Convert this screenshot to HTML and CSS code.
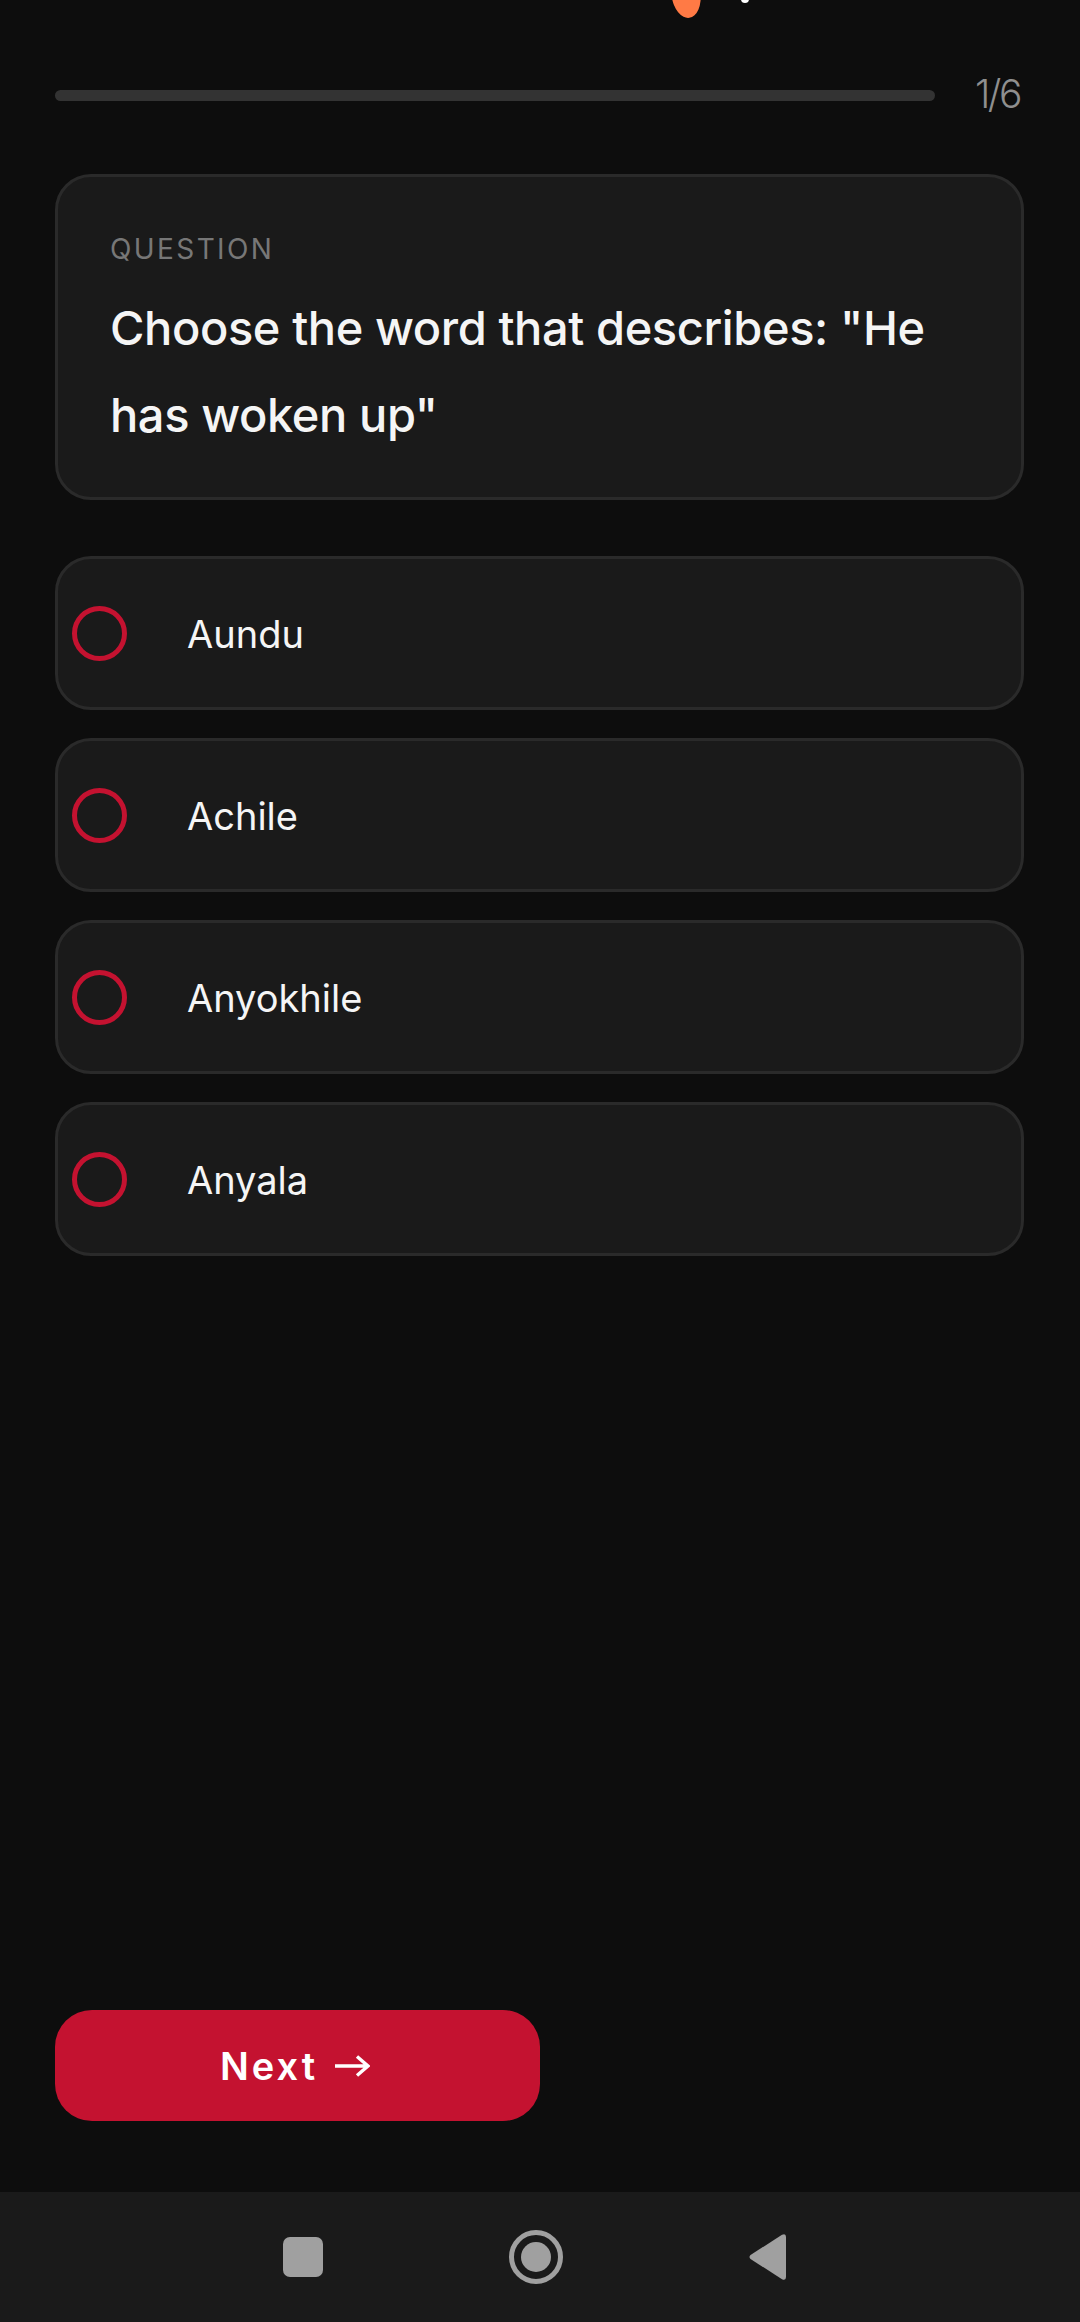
FILE: index.html
```html
<!DOCTYPE html>
<html lang="en">
<head>
<meta charset="utf-8">
<title>Quiz</title>
<link rel="stylesheet" href="styles.css">
</head>
<body>
<div class="screen">
  <div class="status-peek" aria-hidden="true">
    <span class="peek-orange"></span>
    <span class="peek-dot"></span>
  </div>
  <main class="content">
    <div class="progress">
      <div class="progress-track"></div>
      <span class="progress-label">1/6</span>
    </div>
    <section class="question-card">
      <div class="question-eyebrow">QUESTION</div>
      <h1 class="question-text">Choose the word that describes: "He has woken up"</h1>
    </section>
    <ul class="options">
      <li class="option"><span class="radio"></span><span class="option-label">Aundu</span></li>
      <li class="option"><span class="radio"></span><span class="option-label">Achile</span></li>
      <li class="option"><span class="radio"></span><span class="option-label">Anyokhile</span></li>
      <li class="option"><span class="radio"></span><span class="option-label">Anyala</span></li>
    </ul>
    <button class="next" type="button">Next<svg class="next-arrow" viewBox="0 0 36 24" aria-hidden="true"><path d="M1 12H34M23 2.500 34 12 23 21.500" fill="none" stroke="#fff" stroke-width="3.4"/></svg></button>
  </main>
  <nav class="navbar">
    <svg class="nav-square" viewBox="0 0 40 40"><rect width="40" height="40" rx="7" fill="#a0a0a0"/></svg>
    <svg class="nav-home" viewBox="0 0 54 54"><circle cx="27" cy="27" r="24.500" fill="none" stroke="#a0a0a0" stroke-width="5"/><circle cx="27" cy="27" r="15" fill="#a0a0a0"/></svg>
    <svg class="nav-back" viewBox="0 0 37 46"><path d="M33 .8Q37 -1 37 3V43Q37 47 33 45.200L1.500 25Q-.5 23 1.500 21Z" fill="#a0a0a0"/></svg>
  </nav>
</div>
</body>
</html>
```
FILE: styles.css
```css
* { box-sizing: border-box; }
html, body { margin: 0; padding: 0; }
body {
  background: #0d0d0d;
  color: #fff;
  font-family: Inter, "Noto Sans", sans-serif;
}
.screen {
  position: relative;
  width: 1080px;
  height: 2322px;
  display: flex;
  flex-direction: column;
  overflow: hidden;
}
.status-peek { position: absolute; inset: 0 0 auto 0; height: 20px; }
.peek-orange {
  position: absolute;
  left: 672px;
  top: -22px;
  width: 29px;
  height: 40px;
  background: #ff7a45;
  border-radius: 45% 55% 50% 50% / 40% 40% 60% 60%;
  transform: rotate(-8deg);
}
.peek-dot {
  position: absolute;
  left: 741px;
  top: -5px;
  width: 8px;
  height: 8px;
  border-radius: 50%;
  background: #fff;
}
.content {
  flex: 1;
  display: flex;
  flex-direction: column;
  align-items: stretch;
  padding: 78px 56px 71px 55px;
}
.progress {
  display: flex;
  align-items: center;
  gap: 40px;
  height: 34px;
  margin-bottom: 62px;
}
.progress-track {
  flex: 1;
  height: 11px;
  border-radius: 6px;
  background: #333;
}
.progress-label {
  width: 49px;
  margin-top: -3px;
  font-size: 39px;
  font-weight: 300;
  color: #8f8f8f;
  letter-spacing: -2.5px;
}
.question-card {
  height: 326px;
  padding: 55px 52px 0;
  background: #1a1a1a;
  border: 3px solid #2a2a2a;
  border-radius: 36px;
  margin-bottom: 56px;
}
.question-eyebrow {
  font-size: 28px;
  line-height: 34px;
  letter-spacing: 2.4px;
  color: #777;
}
.question-text {
  margin: 18px 0 0;
  font-size: 47px;
  line-height: 87px;
  font-weight: 500;
  letter-spacing: -0.4px;
  color: #f5f5f5;
}
.options {
  list-style: none;
  margin: 0;
  padding: 0;
  display: flex;
  flex-direction: column;
  gap: 28px;
}
.option {
  height: 154px;
  display: flex;
  align-items: center;
  gap: 60px;
  padding-left: 14px;
  background: #1a1a1a;
  border: 3px solid #2a2a2a;
  border-radius: 36px;
}
.radio {
  width: 55px;
  height: 55px;
  border: 5.5px solid #c41230;
  border-radius: 50%;
  flex: none;
}
.option-label {
  padding-top: 2px;
  font-size: 38px;
  font-weight: 400;
  color: #f5f5f5;
}
.next {
  margin-top: auto;
  width: 485px;
  height: 111px;
  display: flex;
  align-items: center;
  justify-content: center;
  gap: 16px;
  padding: 0 5px 0 0;
  border: 0;
  border-radius: 37px;
  background: #c41230;
  color: #fff;
  font: 600 38px Inter, "Noto Sans", sans-serif;
  letter-spacing: 3px;
}
.next-arrow { width: 36px; height: 24px; }
.navbar {
  height: 130px;
  background: #1a1a1a;
  display: flex;
  align-items: center;
  flex: none;
}
.nav-square { width: 40px; height: 40px; margin-left: 283px; }
.nav-home { width: 54px; height: 54px; margin-left: 186px; }
.nav-back { width: 37px; height: 46px; margin-left: 186px; }
```
